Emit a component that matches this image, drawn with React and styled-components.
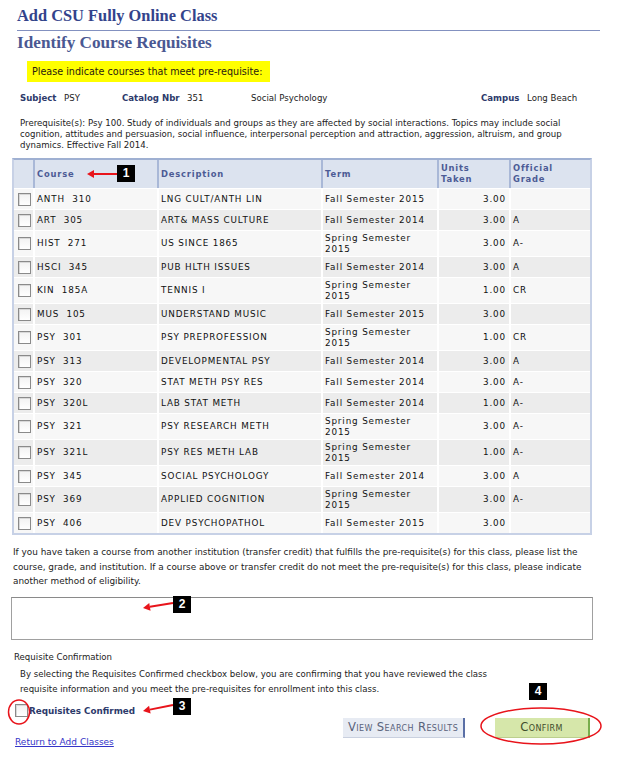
import React from "react";
import styled, { createGlobalStyle } from "styled-components";

const Global = createGlobalStyle`
  html, body { margin: 0; padding: 0; background: #ffffff; }
  body { font-family: "DejaVu Sans", Verdana, sans-serif; color: #222; }
`;

const Page = styled.div`
  position: relative;
  width: 624px;
  height: 763px;
  overflow: hidden;
  padding-top: 6px;
  box-sizing: border-box;
`;

const Title = styled.h1`
  margin: 0 0 0 17px;
  font-family: "Liberation Serif", "Times New Roman", serif;
  font-weight: bold;
  font-size: 16.4px;
  line-height: 20px;
  color: #33438b;
`;

const Rule = styled.hr`
  margin: 4px 24px 0 17px;
  border: 0;
  height: 1px;
  background: #8391c0;
`;

const SubTitle = styled.h2`
  margin: 2px 0 0 17px;
  font-family: "Liberation Serif", "Times New Roman", serif;
  font-weight: bold;
  font-size: 17.2px;
  line-height: 20px;
  color: #4a5892;
`;

const Notice = styled.div`
  margin: 8px 0 0 27px;
  width: 243px;
  height: 21px;
  background: #ffff00;
  display: flex;
  align-items: center;
  padding-left: 5px;
  box-sizing: border-box;
  font-size: 9.6px;
  color: #2a1a10;
  white-space: nowrap;
`;

const InfoRow = styled.div`
  display: grid;
  grid-template-columns: 44px 58px 65px 64px 230px 46px 1fr;
  margin: 10px 0 0 20px;
  font-size: 8.6px;
  line-height: 12px;
  white-space: nowrap;
`;

const Label = styled.span`
  font-weight: bold;
  color: #2d3a6b;
`;

const Value = styled.span`
  color: #222;
`;

const Para = styled.p`
  margin: ${(p) => p.$m || "0"};
  font-size: ${(p) => p.$fs || "8.6px"};
  line-height: ${(p) => p.$lh || "11px"};
  color: #222;
  width: ${(p) => p.$w || "auto"};
`;

const Table = styled.table`
  margin: 7px 0 0 12px;
  width: 580px;
  border-collapse: separate;
  border-spacing: 0;
  table-layout: fixed;
  border: 2px solid #c7d1e6;
  border-top: 2px solid #9fb0d2;
  box-sizing: border-box;
`;

const Th = styled.th`
  background: #dce3ef;
  border-left: ${(p) => (p.$first ? "0" : "2px solid #a9b8d7")};
  height: 28px;
  padding: 1px 2px;
  text-align: left;
  vertical-align: middle;
  font-size: 8.4px;
  line-height: 11px;
  font-weight: bold;
  letter-spacing: 0.8px;
  color: #4c5b95;
  box-sizing: border-box;
`;

const Tr = styled.tr`
  background: ${(p) => (p.$alt ? "#ececec" : "#f7f7f7")};
`;

const Td = styled.td`
  height: 21px;
  padding: 2px 3px 2px 2px;
  border-left: ${(p) => (p.$first ? "0" : "2px solid #ffffff")};
  border-top: 1px solid #ffffff;
  font-size: 8.8px;
  line-height: 10.5px;
  letter-spacing: 0.85px;
  color: #111;
  text-align: ${(p) => (p.$right ? "right" : "left")};
  vertical-align: middle;
  box-sizing: border-box;
  white-space: ${(p) => (p.$wrap ? "normal" : "pre")};
`;

const Box = styled.span`
  display: block;
  width: 11px;
  height: 11px;
  border: 1px solid #8a8a8a;
  background: linear-gradient(#f2f2f2, #ffffff);
  box-shadow: inset 1px 1px 0 #d8d8d8;
  margin-left: ${(p) => p.$ml || "0"};
`;

const TextArea = styled.div`
  margin: 8px 0 0 11px;
  width: 582px;
  height: 43px;
  border: 1px solid #a0a0a0;
  border-top-color: #8a8a8a;
  box-sizing: border-box;
  background: #fff;
`;

const SmallHead = styled.div`
  margin: 11px 0 0 14px;
  font-size: 8.6px;
  line-height: 12px;
  color: #222;
`;

const Footer = styled.div`
  display: flex;
  margin-top: 5px;
`;

const LeftCol = styled.div`
  display: flex;
  flex-direction: column;
  margin-left: 15px;
  width: 300px;
`;

const CheckRow = styled.div`
  display: flex;
  align-items: center;
  gap: 1px;
  height: 16px;
`;

const CheckLabel = styled.span`
  font-weight: bold;
  font-size: 8.8px;
  color: #2d3a6b;
`;

const Link = styled.a`
  margin-top: 18px;
  font-size: 9px;
  color: #3535c8;
  text-decoration: underline;
`;

const Buttons = styled.div`
  display: flex;
  gap: 30px;
  margin: 15px 0 0 28px;
  align-self: flex-start;
`;

const Btn = styled.button`
  width: ${(p) => p.$w};
  height: 20px;
  padding: 0 0 1px 0;
  border: 0;
  border-right: 2px solid ${(p) => p.$edge};
  border-bottom: 1px solid ${(p) => p.$shade};
  background: ${(p) => p.$bg};
  font-family: "DejaVu Sans", Verdana, sans-serif;
  font-variant: small-caps;
  font-size: 11.6px;
  letter-spacing: 0.4px;
  color: ${(p) => p.$fg};
  cursor: pointer;
  white-space: nowrap;
`;

const Callout = styled.div`
  position: absolute;
  left: ${(p) => p.$x}px;
  top: ${(p) => p.$y}px;
  width: 18px;
  height: 17px;
  background: #000;
  color: #fff;
  font-family: "Liberation Sans", Arial, sans-serif;
  font-weight: bold;
  font-size: 12px;
  line-height: 17px;
  text-align: center;
`;

const Overlay = styled.svg`
  position: absolute;
  left: 0;
  top: 0;
  pointer-events: none;
`;

const rows = [
  ["ANTH  310", "LNG CULT/ANTH LIN", "Fall Semester 2015", "3.00", ""],
  ["ART  305", "ART& MASS CULTURE", "Fall Semester 2014", "3.00", "A"],
  ["HIST  271", "US SINCE 1865", "Spring Semester 2015", "3.00", "A-"],
  ["HSCI  345", "PUB HLTH ISSUES", "Fall Semester 2014", "3.00", "A"],
  ["KIN  185A", "TENNIS I", "Spring Semester 2015", "1.00", "CR"],
  ["MUS  105", "UNDERSTAND MUSIC", "Fall Semester 2015", "3.00", ""],
  ["PSY  301", "PSY PREPROFESSION", "Spring Semester 2015", "1.00", "CR"],
  ["PSY  313", "DEVELOPMENTAL PSY", "Fall Semester 2014", "3.00", "A"],
  ["PSY  320", "STAT METH PSY RES", "Fall Semester 2014", "3.00", "A-"],
  ["PSY  320L", "LAB STAT METH", "Fall Semester 2014", "1.00", "A-"],
  ["PSY  321", "PSY RESEARCH METH", "Spring Semester 2015", "3.00", "A-"],
  ["PSY  321L", "PSY RES METH LAB", "Spring Semester 2015", "1.00", "A-"],
  ["PSY  345", "SOCIAL PSYCHOLOGY", "Fall Semester 2014", "3.00", "A"],
  ["PSY  369", "APPLIED COGNITION", "Spring Semester 2015", "3.00", "A-"],
  ["PSY  406", "DEV PSYCHOPATHOL", "Fall Semester 2015", "3.00", ""],
];

const Arrow = ({ x1, y1, x2, y2 }) => {
  const ang = Math.atan2(y2 - y1, x2 - x1);
  const len = 7;
  const w = 4;
  const bx = x2 - len * Math.cos(ang);
  const by = y2 - len * Math.sin(ang);
  const px = -Math.sin(ang) * w;
  const py = Math.cos(ang) * w;
  return (
    <g>
      <line x1={x1} y1={y1} x2={bx} y2={by} stroke="#e8141b" strokeWidth="2" />
      <polygon
        points={`${x2},${y2} ${bx + px},${by + py} ${bx - px},${by - py}`}
        fill="#e8141b"
      />
    </g>
  );
};

export default function App() {
  return (
    <>
      <Global />
      <Page>
        <Title>Add CSU Fully Online Class</Title>
        <Rule />
        <SubTitle>Identify Course Requisites</SubTitle>
        <Notice>Please indicate courses that meet pre-requisite:</Notice>
        <InfoRow>
          <Label>Subject</Label>
          <Value>PSY</Value>
          <Label>Catalog Nbr</Label>
          <Value>351</Value>
          <Value>Social Psychology</Value>
          <Label>Campus</Label>
          <Value>Long Beach</Value>
        </InfoRow>
        <Para $m="14px 0 0 20px" $w="570px">
          Prerequisite(s): Psy 100. Study of individuals and groups as they are affected by social
          interactions. Topics may include social cognition, attitudes and persuasion, social
          influence, interpersonal perception and attraction, aggression, altruism, and group
          dynamics. Effective Fall 2014.
        </Para>
        <Table>
          <colgroup>
            <col style={{ width: 19 }} />
            <col style={{ width: 124 }} />
            <col style={{ width: 164 }} />
            <col style={{ width: 116 }} />
            <col style={{ width: 72 }} />
            <col style={{ width: 81 }} />
          </colgroup>
          <thead>
            <tr>
              <Th $first></Th>
              <Th>Course</Th>
              <Th>Description</Th>
              <Th>Term</Th>
              <Th>
                Units
                <br />
                Taken
              </Th>
              <Th>
                Official
                <br />
                Grade
              </Th>
            </tr>
          </thead>
          <tbody>
            {rows.map((r, i) => (
              <Tr key={i} $alt={i % 2 === 1}>
                <Td $first>
                  <Box $ml="2px" />
                </Td>
                <Td>{r[0]}</Td>
                <Td>{r[1]}</Td>
                <Td $wrap>{r[2]}</Td>
                <Td $right>{r[3]}</Td>
                <Td>{r[4]}</Td>
              </Tr>
            ))}
          </tbody>
        </Table>
        <Para $m="10px 0 0 13px" $fs="8.9px" $lh="14.5px" $w="580px">
          If you have taken a course from another institution (transfer credit) that fulfills the
          pre-requisite(s) for this class, please list the course, grade, and institution. If a
          course above or transfer credit do not meet the pre-requisite(s) for this class, please
          indicate another method of eligibility.
        </Para>
        <TextArea />
        <SmallHead>Requisite Confirmation</SmallHead>
        <Para $m="4px 0 0 20px" $lh="15.5px" $w="500px">
          By selecting the Requisites Confirmed checkbox below, you are confirming that you have
          reviewed the class requisite information and you meet the pre-requisites for enrollment
          into this class.
        </Para>
        <Footer>
          <LeftCol>
            <CheckRow>
              <Box />
              <CheckLabel>Requisites Confirmed</CheckLabel>
            </CheckRow>
            <Link href="#">Return to Add Classes</Link>
          </LeftCol>
          <Buttons>
            <Btn $w="122px" $bg="#e7ebf3" $edge="#5a6fa6" $shade="#c9d0df" $fg="#59627a">
              View Search Results
            </Btn>
            <Btn $w="95px" $bg="#d6e7aa" $edge="#78ad4c" $shade="#bccf8e" $fg="#3f4d2c">
              Confirm
            </Btn>
          </Buttons>
        </Footer>

        <Overlay width="624" height="763">
          <Arrow x1={117} y1={174} x2={87} y2={174} />
          <Arrow x1={173} y1={603} x2={143} y2={608} />
          <Arrow x1={173} y1={705} x2={143} y2={711} />
          <ellipse cx="19" cy="712" rx="10.5" ry="12" fill="none" stroke="#e8141b" strokeWidth="1.5" />
          <ellipse cx="541" cy="726" rx="60" ry="18" fill="none" stroke="#e8141b" strokeWidth="1.5" />
        </Overlay>
        <Callout $x={117} $y={165}>1</Callout>
        <Callout $x={173} $y={596}>2</Callout>
        <Callout $x={173} $y={698}>3</Callout>
        <Callout $x={529} $y={683}>4</Callout>
      </Page>
    </>
  );
}
